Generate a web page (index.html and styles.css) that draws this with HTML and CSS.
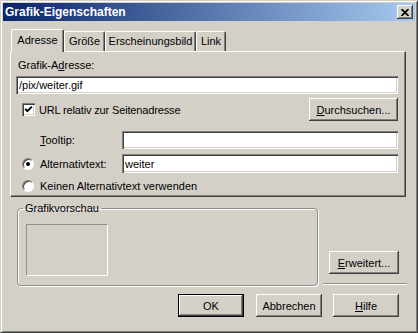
FILE: index.html
```html
<!DOCTYPE html>
<html>
  <head>
    <title>Grafik-Eigenschaften</title>
    <link rel="stylesheet" href="styles.css">
  </head>
  <body>
    <div class="window">
      <div class="titlebar">
        <span class="title">Grafik-Eigenschaften</span>
        <span class="close">
          <svg width="8" height="7" viewBox="0 0 8 7">
            <path d="M0.5 0 L7.5 7 M7.5 0 L0.5 7" stroke="#000" stroke-width="1.7" fill="none" />
          </svg>
        </span>
      </div>

      <div class="tabs">
        <div class="tab active tab-adresse">Adresse</div>
        <div class="tab tab-groesse">Größe</div>
        <div class="tab tab-bild">Erscheinungsbild</div>
        <div class="tab tab-link">Link</div>
      </div>

      <div class="panel">
        <div class="label">Grafik-A<u>d</u>resse:</div>
        <input class="field address" type="text" value="/pix/weiter.gif" />

        <div class="row check-row">
          <span class="checkbox">
            <svg width="9" height="9" viewBox="0 0 9 9">
              <path d="M1.2 3.8 L3.4 6.2 L7.8 1.6" stroke="#000" stroke-width="1.9" fill="none" />
            </svg>
          </span>
          <span class="check-label">URL relativ zur Seitenadresse</span>
          <button class="btn browse"><u>D</u>urchsuchen...</button>
        </div>

        <div class="row field-row tooltip-row">
          <span class="row-label indent"><u>T</u>ooltip:</span>
          <input class="field small" type="text" />
        </div>

        <div class="row field-row alt-row">
          <span class="radio checked"></span>
          <span class="row-label">Alternativtext:</span>
          <input class="field small" type="text" value="weiter" />
        </div>

        <div class="row none-row">
          <span class="radio"></span>
          <span class="row-label">Keinen Alternativtext verwenden</span>
        </div>
      </div>

      <div class="preview-row">
        <fieldset class="group">
          <legend>Grafikvorschau</legend>
          <div class="preview"></div>
        </fieldset>
        <div class="side">
          <button class="btn more"><u>E</u>rweitert...</button>
          <div class="separator"></div>
        </div>
      </div>

      <div class="actions">
        <button class="btn default">OK</button>
        <button class="btn">Abbrechen</button>
        <button class="btn"><u>H</u>ilfe</button>
      </div>
    </div>
  </body>
</html>
```

FILE: styles.css
```css
* {
  box-sizing: border-box;
}

body {
  margin: 0;
  background: #d4d0c8;
  font-family: "Liberation Sans", Arial, sans-serif;
  font-size: 11px;
  color: #000;
}

u {
  text-decoration: underline;
  text-underline-offset: 1px;
}

.window {
  width: 418px;
  height: 333px;
  overflow: hidden;
  background: #d4d0c8;
  border: 1px solid;
  border-color: #d4d0c8 #404040 #404040 #d4d0c8;
  box-shadow: inset 1px 1px #fff, inset -1px -1px #808080;
  padding: 2px;
}

/* Title bar */
.titlebar {
  height: 18px;
  display: flex;
  align-items: center;
  justify-content: space-between;
  background: linear-gradient(to right, #0a246a, #a6caf0);
  padding: 0 2px 0 2px;
}

.title {
  color: #fff;
  font-weight: bold;
  font-size: 12px;
}

.close {
  width: 16px;
  height: 14px;
  display: flex;
  align-items: center;
  justify-content: center;
  background: #d4d0c8;
  box-shadow: inset -1px -1px #404040, inset 1px 1px #fff, inset -2px -2px #808080;
}

/* Tabs */
.tabs {
  display: flex;
  align-items: flex-end;
  margin: 8px 0 0 8px;
  height: 22px;
  position: relative;
  z-index: 1;
}

.tab {
  height: 20px;
  line-height: 18px;
  text-align: center;
  border-top: 1px solid #fff;
  border-left: 1px solid #fff;
  border-right: 1px solid #404040;
  border-radius: 2px 2px 0 0;
  box-shadow: inset -1px 0 #808080;
}

.tab.active {
  height: 23px;
  margin-bottom: -1px;
  line-height: 20px;
  background: #d4d0c8;
}

.tab-adresse { width: 53px; }
.tab-groesse { width: 41px; }
.tab-bild { width: 91px; }
.tab-link { width: 30px; }

/* Tab panel */
.panel {
  width: 396px;
  height: 146px;
  margin-left: 7px;
  border: 1px solid;
  border-color: #fff #404040 #404040 #fff;
  box-shadow: inset -1px -1px #808080;
  padding: 0 7px 0 5px;
}

.label {
  margin-top: 7px;
  line-height: 13px;
  padding-left: 2px;
}

.field {
  display: block;
  height: 18px;
  border: none;
  background: #fff;
  box-shadow: inset 1px 1px #808080, inset 2px 2px #404040, inset -1px -1px #fff, inset -2px -2px #d4d0c8;
  font-family: "Liberation Sans", Arial, sans-serif;
  font-size: 11px;
  padding: 0 3px;
  outline: none;
}

.address {
  width: 382px;
  margin-top: 4px;
}

.row {
  display: flex;
  align-items: center;
}

.check-row {
  margin-top: 4px;
  height: 23px;
}

.checkbox {
  width: 13px;
  height: 13px;
  margin-left: 6px;
  display: flex;
  align-items: center;
  justify-content: center;
  background: #fff;
  box-shadow: inset 1px 1px #808080, inset 2px 2px #404040, inset -1px -1px #fff, inset -2px -2px #d4d0c8;
}

.check-label {
  margin-left: 4px;
  letter-spacing: -0.15px;
}

.btn {
  height: 23px;
  border: none;
  background: #d4d0c8;
  box-shadow: inset -1px -1px #404040, inset 1px 1px #fff, inset -2px -2px #808080;
  font-family: "Liberation Sans", Arial, sans-serif;
  font-size: 11px;
  color: #000;
  padding: 0;
}

.browse {
  width: 89px;
  margin-left: auto;
  margin-right: 0;
}

.field-row {
  height: 18px;
}

.tooltip-row {
  margin-top: 10px;
}

.alt-row {
  margin-top: 5px;
  height: 19px;
}

.field.small {
  width: 276px;
  margin-left: auto;
}

.alt-row .field.small {
  height: 19px;
}

.row-label.indent {
  margin-left: 24px;
}

.radio {
  width: 12px;
  height: 12px;
  margin-left: 6px;
  margin-right: 6px;
  border-radius: 50%;
  border: 1px solid;
  border-color: #808080 #fff #fff #808080;
  background: #fff;
  box-shadow: inset 1px 1px #404040;
  display: flex;
  align-items: center;
  justify-content: center;
}

.radio.checked::after {
  content: "";
  width: 4px;
  height: 4px;
  border-radius: 50%;
  background: #000;
}

.none-row {
  margin-top: 6px;
  height: 14px;
}

/* Preview group */
.preview-row {
  display: flex;
  margin-top: 4px;
}

.group {
  width: 301px;
  height: 85px;
  margin: 0 0 0 14px;
  padding: 0 0 0 8px;
  border: 1px solid #8e8f8f;
  border-radius: 4px;
  box-shadow: inset 1px 1px #fff, 1px 1px #fff;
  min-width: 0;
}

.group legend {
  margin-left: -3px;
  padding: 0 2px;
  line-height: 14px;
}

.preview {
  width: 82px;
  height: 52px;
  margin-top: 9px;
  border: 1px solid;
  border-color: #8e8f8f #fff #fff #8e8f8f;
  box-shadow: 1px 1px #d4d0c8;
}

.side {
  width: 84px;
  margin-left: 5px;
}

.more {
  width: 70px;
  margin: 50px 0 0 6px;
  display: block;
}

.separator {
  margin-top: 9px;
  height: 2px;
  border-top: 1px solid #8e8f8f;
  border-bottom: 1px solid #fff;
}

/* Dialog buttons */
.actions {
  display: flex;
  margin: 8px 0 0 175px;
  gap: 12px;
}

.actions .btn {
  width: 66px;
}

.actions .btn:last-child {
  margin-left: -1px;
}

.btn.default {
  box-shadow: inset 0 0 0 1px #000, inset -2px -2px #404040, inset 2px 2px #fff, inset -3px -3px #808080;
}
```
